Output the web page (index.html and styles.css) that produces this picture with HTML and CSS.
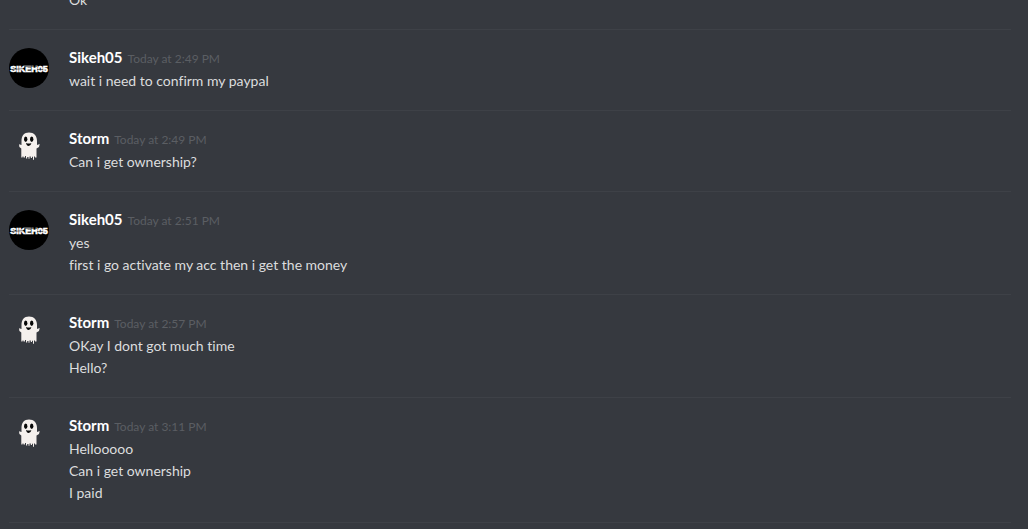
FILE: index.html
```
<!DOCTYPE html>
<html lang="en">
<head>
<meta charset="utf-8">
<meta name="viewport" content="width=device-width, initial-scale=1">
<title>Chat</title>
<link rel="stylesheet" href="styles.css">
</head>
<body>
<svg class="sprites" aria-hidden="true">
  <symbol id="ghost" viewBox="0 0 40 40">
    <path fill="#f5f0ed" d="M20 3.500c-5 0-7.500 3.300-7.500 8.500v4l-2.500-.7.400 2.700 1.900 1.600v8.900h1.200v-1h1v1h1.500v-1.500h1v2.500h1.200v-1.500h1.300v1.800h1v-2.300h1.300v1.500h1.200v-1.200h1v3h1v-3.300h1v1h1.500v-8.900l2.500-1.600.7-3-2.700.9v-4c0-5.200-3-8.400-8-8.400z"/>
    <ellipse cx="16.700" cy="10.300" rx="1.700" ry="2.700" fill="#080808"/>
    <ellipse cx="22.700" cy="10.300" rx="1.700" ry="2.700" fill="#080808"/>
    <path fill="#080808" d="M17 14q3 1.200 5.400 0-.6 3-2.700 3t-2.700-3z"/>
  </symbol>
  <symbol id="wordmark" viewBox="0 0 40 40">
    <circle cx="20" cy="20" r="20" fill="#000"/>
    <text x="20" y="24" class="wordmark-text" text-anchor="middle">SIKEH05</text>
    <path stroke="#000" stroke-width=".5" d="M3 21.500l13-1M15 18.500h13M28 21.500h6"/>
  </symbol>
</svg>
<main class="chat">
  <article class="message">
    <svg class="avatar" aria-hidden="true"><use href="#ghost"/></svg>
    <div class="body">
      <header class="head"></header>
      <p class="text">Ok</p>
    </div>
  </article>
  <article class="message">
    <svg class="avatar" aria-hidden="true"><use href="#wordmark"/></svg>
    <div class="body">
      <header class="head"><h2 class="name">Sikeh05</h2><time class="time">Today at 2:49 PM</time></header>
      <p class="text">wait i need to confirm my paypal</p>
    </div>
  </article>
  <article class="message">
    <svg class="avatar" aria-hidden="true"><use href="#ghost"/></svg>
    <div class="body">
      <header class="head"><h2 class="name">Storm</h2><time class="time">Today at 2:49 PM</time></header>
      <p class="text">Can i get ownership?</p>
    </div>
  </article>
  <article class="message">
    <svg class="avatar" aria-hidden="true"><use href="#wordmark"/></svg>
    <div class="body">
      <header class="head"><h2 class="name">Sikeh05</h2><time class="time">Today at 2:51 PM</time></header>
      <p class="text">yes</p>
      <p class="text">first i go activate my acc then i get the money</p>
    </div>
  </article>
  <article class="message">
    <svg class="avatar" aria-hidden="true"><use href="#ghost"/></svg>
    <div class="body">
      <header class="head"><h2 class="name">Storm</h2><time class="time">Today at 2:57 PM</time></header>
      <p class="text">OKay I dont got much time</p>
      <p class="text">Hello?</p>
    </div>
  </article>
  <article class="message">
    <svg class="avatar" aria-hidden="true"><use href="#ghost"/></svg>
    <div class="body">
      <header class="head"><h2 class="name">Storm</h2><time class="time">Today at 3:11 PM</time></header>
      <p class="text">Hellooooo</p>
      <p class="text">Can i get ownership</p>
      <p class="text">I paid</p>
    </div>
  </article>
</main>
</body>
</html>
```
FILE: styles.css
```
body {
  margin: 0;
  background: #36393f;
  color: #dcddde;
  font-family: Lato, "Open Sans", sans-serif;
  font-variant-ligatures: none;
}

.sprites {
  position: absolute;
  width: 0;
  height: 0;
}

/* Messages stack up from the bottom edge; older ones run off the top. */
.chat {
  box-sizing: border-box;
  height: 100vh;
  padding: 0 17px 6px 9px;
  display: flex;
  flex-direction: column;
  justify-content: flex-end;
  overflow: hidden;
}

.message {
  flex: none;
  display: flex;
  gap: 20px;
  padding: 18px 0;
  border-bottom: 1px solid #3e4147;
}

.avatar {
  flex: none;
  width: 40px;
  height: 40px;
}

.wordmark-text {
  font: 700 9px "Liberation Sans", sans-serif;
  fill: #fff;
  stroke: #fff;
  stroke-width: 0.6px;
}

.body {
  flex: 1;
  min-width: 0;
}

.head {
  display: flex;
  align-items: baseline;
  gap: 5px;
  height: 22px;
}

.name {
  margin: 0;
  color: #fff;
  font-size: 15px;
  font-weight: 700;
  line-height: 18px;
}

.time {
  color: #5b5e63;
  font-size: 12px;
  line-height: 18px;
}

.text {
  margin: 0;
  font-size: 14px;
  line-height: 22px;
}
```
